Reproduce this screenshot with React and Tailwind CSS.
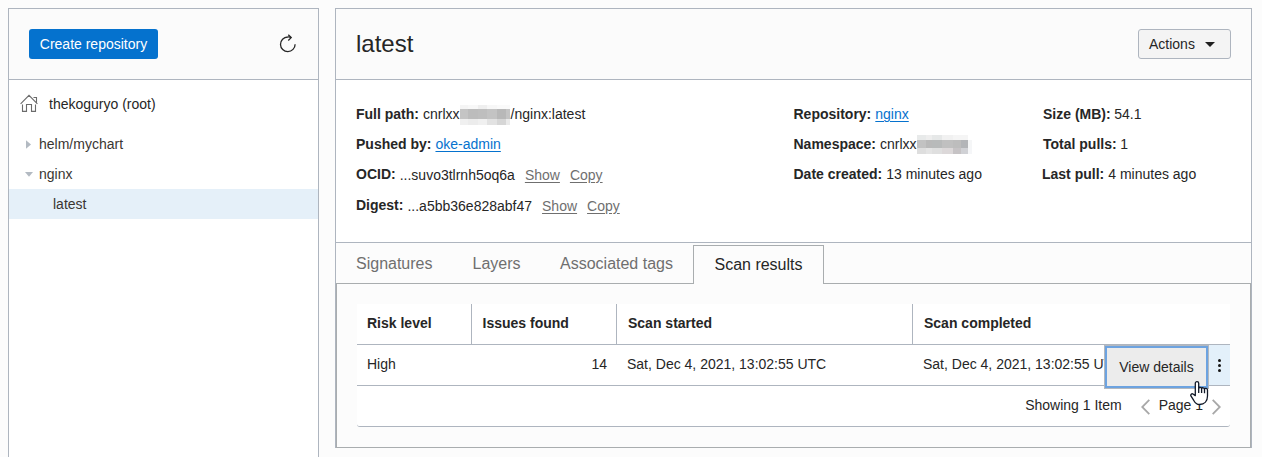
const linkGray = 'text-[#6f6f6f] underline underline-offset-[2px]';
const linkBlue = 'text-[#0572ce] underline underline-offset-[2px]';

function Redacted({ rows, heights, className = '' }) {
  return (
    <span className={`inline-flex flex-col ${className}`} aria-hidden="true">
      {rows.map((row, i) => (
        <span key={i} className="flex" style={{ height: heights[i] }}>
          {row.map((c, j) => (
            <span key={j} className="h-full" style={{ width: c[1], backgroundColor: c[0] }} />
          ))}
        </span>
      ))}
    </span>
  );
}

const pathMask = [
  [['#f5f5f5', 8], ['#f8f8f8', 10], ['#efefef', 9], ['#f7f7f7', 10], ['#fafafa', 13]],
  [['#c4c4c4', 8], ['#bcbcbc', 10], ['#bebebe', 9], ['#c3c3c3', 10], ['#b8b8b8', 9], ['#c4c4c4', 4]],
  [['#f0f0f0', 8], ['#ececec', 10], ['#f0f0f0', 9], ['#e2e2e2', 10], ['#d6d6d6', 9], ['#eaeaea', 4]],
];
const nameMask = [
  [['#e8eaea', 9], ['#eeeeee', 6], ['#e6e8e8', 10], ['#f1f1f1', 11], ['#f5f5f5', 15]],
  [['#c2c2c2', 9], ['#b9b9b9', 6], ['#b8baba', 10], ['#c0c0c0', 11], ['#bdbdbd', 8], ['#b3b5b8', 7], ['#f5f6f7', 4]],
  [['#dedede', 9], ['#e4e4e4', 6], ['#dfdfdf', 10], ['#dcd8d9', 11], ['#c6c3c5', 8], ['#d0d1d5', 7], ['#f5f6f8', 4]],
];

function Field({ label, children, className = '' }) {
  return (
    <div className={`flex h-5 items-center whitespace-nowrap ${className}`}>
      <span className="font-bold">{label}</span>
      {children}
    </div>
  );
}

function Sidebar() {
  return (
    <aside className="flex w-[311px] shrink-0 flex-col border-x border-t border-[#aeb5bf] bg-white text-[#3a3632]">
      <div className="flex h-[71px] items-center justify-between border-b border-[#aeb5bf] bg-[#fbfbfb] pr-5 pl-5">
        <button className="h-[30px] w-[129px] rounded-[3px] bg-[#0572ce] text-center text-white">Create repository</button>
        <svg className="h-5 w-5" viewBox="0 0 20 20" fill="none" stroke="#262626" strokeWidth="1.3">
          <path d="M13 3.6C12 3 10.8 2.9 9.7 3a7.3 7.3 0 1 0 7.4 7.2" />
          <path d="M10.3.7l2.9 2.9-2.9 2.9" />
        </svg>
      </div>
      <div className="flex h-[49px] items-center pb-[2px] pl-[11px] text-[#262626]">
        <svg className="h-5 w-[19px]" viewBox="0 0 19 20" fill="none" stroke="#6b6b6b" strokeWidth="1.1">
          <path d="M.6 9.9L9 1.4l8.4 8.5M13.5 3.5h3v4.9M2.5 10.5v6.9h4v-6.9h5v6.9h4v-6.9" />
        </svg>
        <span className="ml-[10px]">thekoguryo (root)</span>
      </div>
      <div className="flex h-[30px] items-center pl-[17px]">
        <svg className="h-[9px] w-[6px]" viewBox="0 0 6 9"><path d="M0 .3L5 4.5 0 8.7z" fill="#b3bac2" /></svg>
        <span className="ml-[7px]">helm/mychart</span>
      </div>
      <div className="flex h-[30px] items-center pl-[16px]">
        <svg className="h-[5px] w-[8px]" viewBox="0 0 8 5"><path d="M0 0h8L4 4.7z" fill="#b3bac2" /></svg>
        <span className="ml-[6px]">nginx</span>
      </div>
      <div className="flex h-[30px] items-center bg-[#e5f0f9] pl-[44px]">latest</div>
    </aside>
  );
}

function Details() {
  return (
    <section className="flex h-[163px] border-b border-[#aeb5bf] bg-white pt-6 pl-5">
      <div className="flex w-[437.5px] flex-col">
        <Field label="Full path:">
          <span className="ml-1">cnrlxx</span>
          <Redacted rows={pathMask} heights={[4, 10, 6]} className="mt-[2px]" />
          <span className="ml-px">/nginx:latest</span>
        </Field>
        <Field label="Pushed by:" className="mt-[10px]">
          <a className={`ml-1 ${linkBlue}`}>oke-admin</a>
        </Field>
        <Field label="OCID:" className="mt-[10px]">
          <span className="mt-[2px] ml-1">...suvo3tlrnh5oq6a</span>
          <a className={`mt-[2px] ml-[10px] ${linkGray}`}>Show</a>
          <a className={`mt-[2px] ml-[10px] ${linkGray}`}>Copy</a>
        </Field>
        <Field label="Digest:" className="mt-[11px]">
          <span className="mt-[2px] ml-1">...a5bb36e828abf47</span>
          <a className={`mt-[2px] ml-[10px] ${linkGray}`}>Show</a>
          <a className={`mt-[2px] ml-[10px] ${linkGray}`}>Copy</a>
        </Field>
      </div>
      <div className="flex w-[249.5px] flex-col gap-[10px]">
        <Field label="Repository:"><a className={`ml-1 ${linkBlue}`}>nginx</a></Field>
        <Field label="Namespace:">
          <span className="ml-1">cnrlxx</span>
          <Redacted rows={nameMask} heights={[5, 8, 6]} className="mt-px" />
        </Field>
        <Field label="Date created:"><span className="ml-1">13 minutes ago</span></Field>
      </div>
      <div className="flex flex-col gap-[10px]">
        <Field label="Size (MB):"><span className="ml-[3.5px]">54.1</span></Field>
        <Field label="Total pulls:"><span className="ml-[3.5px]">1</span></Field>
        <Field label="Last pull:" className="-ml-px"><span className="ml-1">4 minutes ago</span></Field>
      </div>
    </section>
  );
}

function Tabs() {
  return (
    <nav className="flex h-[41px] text-[16px] text-[#6f6f6f]">
      <div className="flex w-[357px] items-center border-b border-[#a9adaf] pt-[2px] pl-5">
        <span className="w-[116.5px]">Signatures</span>
        <span className="w-[87.5px]">Layers</span>
        <span className="whitespace-nowrap">Associated tags</span>
      </div>
      <div className="mt-[2px] flex w-[131px] items-center justify-center border-x border-t border-[#a9adaf] text-[#262626]">Scan results</div>
      <div className="flex-1 border-b border-[#a9adaf]" />
    </nav>
  );
}

function ScanTable() {
  return (
    <div className="relative mx-5 mt-5 h-[123px] rounded-b-[3px] border-b border-[#aeb5bf] bg-white">
      <div className="flex h-[41px] border-b border-[#aeb5bf] font-bold">
        <div className="flex w-[115px] items-center border-r border-[#aeb5bf] pb-[2px] pl-[10px]">Risk level</div>
        <div className="flex w-[145px] items-center border-r border-[#aeb5bf] pb-[2px] pl-[10.5px]">Issues found</div>
        <div className="flex w-[296px] items-center border-r border-[#aeb5bf] pb-[2px] pl-[11px]">Scan started</div>
        <div className="flex items-center pb-[2px] pl-[11px]">Scan completed</div>
      </div>
      <div className="flex h-[41px] border-b border-[#aeb5bf]">
        <div className="flex w-[115px] items-center pb-[2px] pl-[10px]">High</div>
        <div className="flex w-[145px] items-center justify-end pr-[10px] pb-[2px]">14</div>
        <div className="flex w-[296px] items-center pb-[2px] pl-[10px]">Sat, Dec 4, 2021, 13:02:55 UTC</div>
        <div className="flex flex-1 items-center pb-[2px] pl-[10px]">Sat, Dec 4, 2021, 13:02:55 UTC</div>
        <div className="flex w-[21px] flex-col items-center justify-center gap-[2px] bg-[#e3f0fa] pt-px">
          <i className="size-[3px] rounded-full bg-[#161616]" />
          <i className="size-[3px] rounded-full bg-[#161616]" />
          <i className="size-[3px] rounded-full bg-[#161616]" />
        </div>
      </div>
      <div className="flex h-10 items-center justify-end pr-[9px] pb-[2px]">
        <span>Showing 1 Item</span>
        <svg className="mt-1 ml-[19px] h-4 w-[9px]" viewBox="0 0 9 16" fill="none" stroke="#a8a8a8" strokeWidth="1.8"><path d="M8.3.8L1.2 8l7.1 7.2" /></svg>
        <span className="ml-[9px]">Page 1</span>
        <svg className="mt-1 ml-[9px] h-4 w-[9px]" viewBox="0 0 9 16" fill="none" stroke="#a8a8a8" strokeWidth="1.8"><path d="M.7.8L7.8 8 .7 15.2" /></svg>
      </div>
      <div className="absolute top-[41px] left-[747px] h-[44px] w-[105px] border border-[#b3b8bf]">
        <div className="flex h-full items-center justify-center border-2 border-[#6da3e0] bg-[#ececec]">View details</div>
      </div>
      <svg className="absolute top-[77px] left-[833px] h-[25px] w-[19px]" viewBox="0 0 19 25" fill="white" stroke="#111827" strokeWidth="1.3" strokeLinejoin="round">
        <path d="M5.3 14.6V2.3C5.3 1.3 6 .7 7 .7s1.7.6 1.7 1.6v5c.2-1.2 2.7-1.2 2.9.3.2-1.2 2.6-1.1 2.9.4.3-1 3-.9 3 1.1V15c0 5-3 8.5-8 8.5-3 0-4.6-1.9-5.6-3.8L.9 14.9c-.6-1.3.8-2.6 2.1-1.9z" />
        <path d="M8.7 7.2V12M11.6 7.6V12M14.5 8V12.3" fill="none" />
      </svg>
    </div>
  );
}

export default function App() {
  return (
    <div className="flex h-[457px] w-[1262px] items-stretch overflow-hidden bg-[#fcfcfc] pt-2 pl-2 font-['Liberation_Sans',Arial,sans-serif] text-[14px] leading-5 text-[#262626]">
      <Sidebar />
      <main className="ml-4 flex h-[440px] w-[917px] flex-col border-x border-t border-[#aeb5bf] bg-[#fcfcfc]">
        <header className="flex h-[71px] shrink-0 items-center justify-between border-b border-[#aeb5bf] bg-[#fbfbfb] px-5">
          <h1 className="text-[24px] leading-8">latest</h1>
          <button className="flex h-[30px] w-[93px] items-center rounded-[3px] border border-[#aeb5bf] bg-[#f4f4f4] pl-[10px]">
            Actions
            <svg className="ml-[10px] h-[5px] w-[10px]" viewBox="0 0 10 5"><path d="M0 0h10L5 5z" fill="#202020" /></svg>
          </button>
        </header>
        <Details />
        <Tabs />
        <div className="flex-1 border-x border-b border-[#a9adaf]">
          <ScanTable />
        </div>
      </main>
    </div>
  );
}
